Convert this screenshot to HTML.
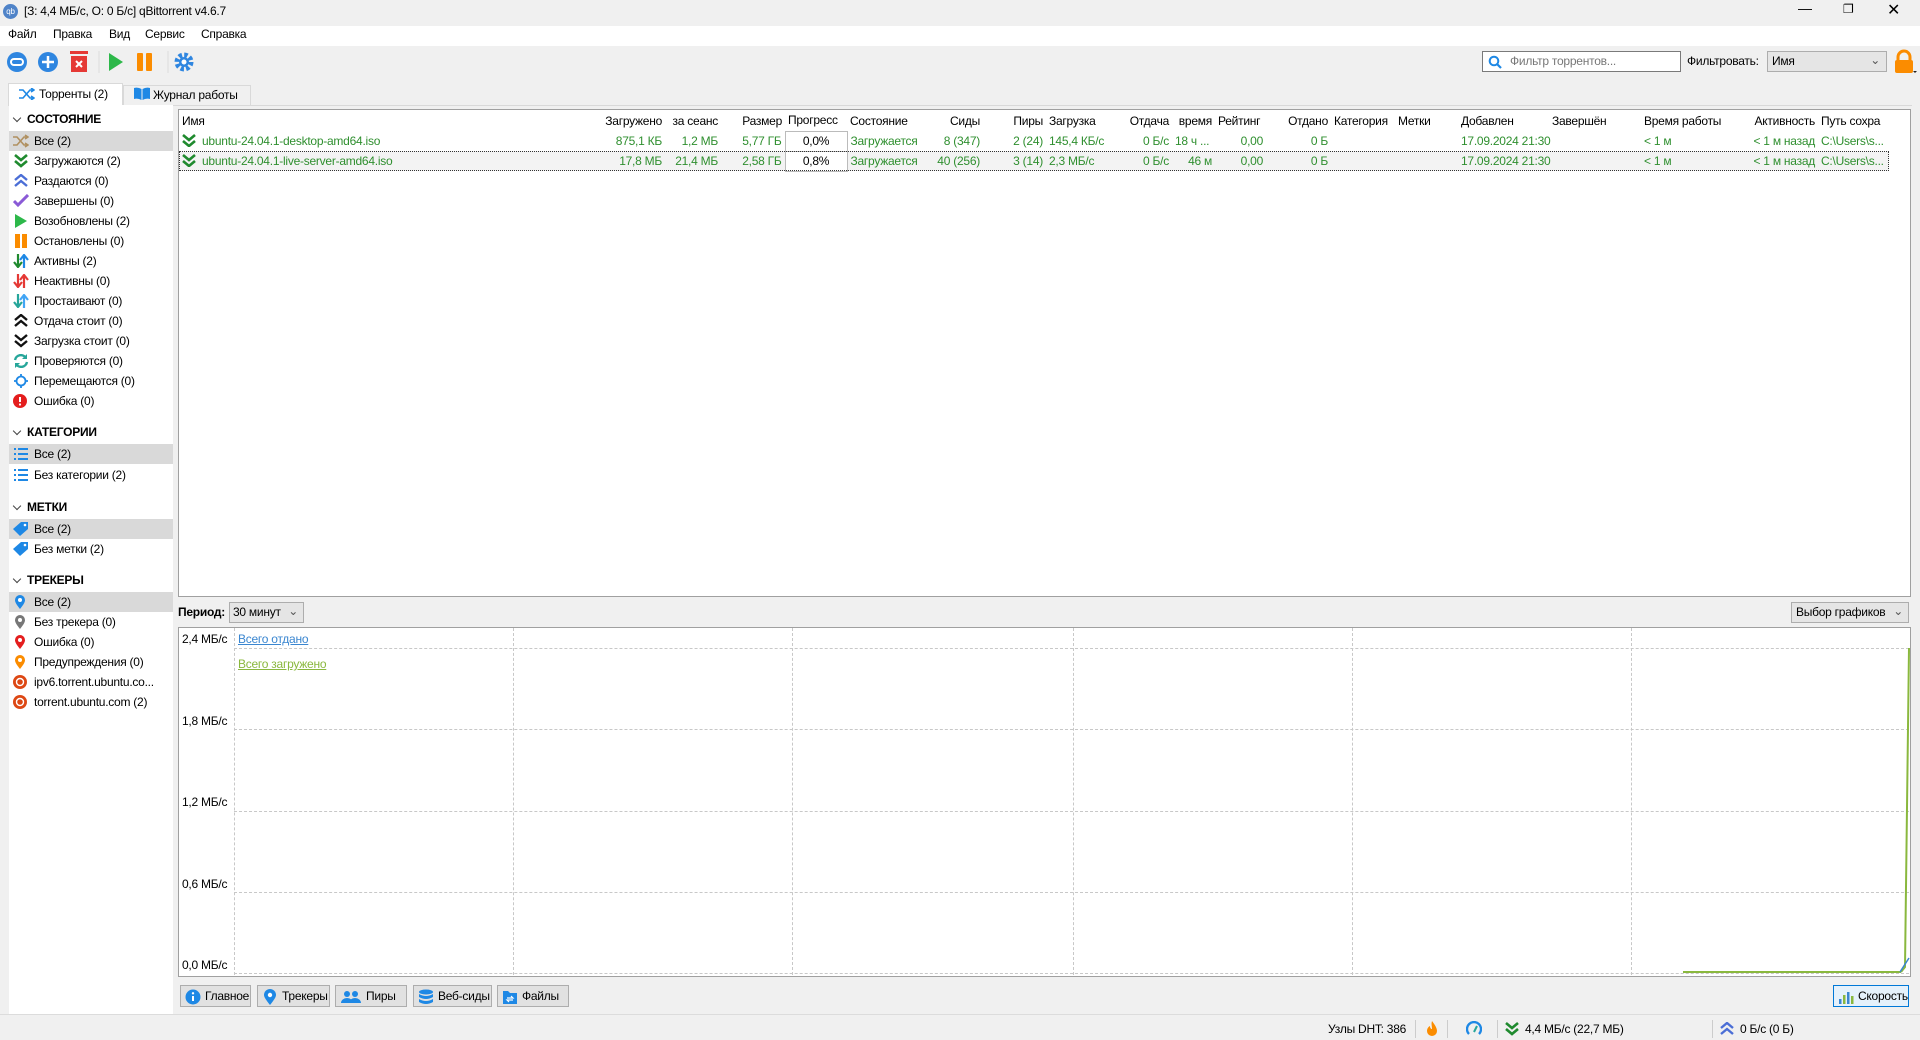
<!DOCTYPE html>
<html><head><meta charset="utf-8"><style>
*{box-sizing:border-box;margin:0;padding:0}
body{width:1920px;height:1040px;background:#f0f0f0;font-family:"Segoe UI","Liberation Sans","DejaVu Sans",sans-serif;font-size:12px;letter-spacing:-0.25px;color:#000;position:relative;overflow:hidden}
.a{position:absolute;white-space:nowrap}
.side{position:absolute;left:9px;top:105px;width:164px;height:910px;background:#fff}
.it{position:absolute;left:0;width:164px;height:20px;line-height:20px;padding-left:25px;white-space:nowrap}
.it.sel{background:#d9d9d9}
.it svg{position:absolute;left:4px;top:3px}
.hd{position:absolute;left:0;height:20px;line-height:20px;padding-left:18px;font-weight:bold}
.hd:before{content:"";position:absolute;left:5px;top:6px;width:5px;height:5px;border-right:1.5px solid #444;border-bottom:1.5px solid #444;transform:rotate(45deg)}
table{border-collapse:collapse;table-layout:fixed;position:absolute;left:179px;top:110px;width:1710px}
td{height:20px;padding:0 3px;overflow:visible;white-space:nowrap}
tr.h td{height:21px}
.r{text-align:right}
.g td{color:#2f8f2f}
.btn{position:absolute;top:985px;height:22px;background:#e1e1e1;border:1px solid #adadad;line-height:20px;padding-left:24px;white-space:nowrap}
.btn svg{position:absolute;left:4px;top:3px}
.hl{position:absolute;left:234px;width:1675px;border-top:1px dashed #c8c8c8}
.vl{position:absolute;top:628px;height:347px;border-left:1px dashed #c8c8c8}
.yl{position:absolute;left:182px}
.sep{position:absolute;top:1020px;height:18px;border-left:1px solid #ccc}
</style></head><body>
<div class="a" style="left:3px;top:4px;width:15px;height:15px;border-radius:50%;background:#4f83c8;color:#fff;font-size:8px;line-height:15px;text-align:center">qb</div>
<div class="a" style="left:24px;top:4px">[З: 4,4 МБ/с, О: 0 Б/с] qBittorrent v4.6.7</div>
<div class="a" style="left:1798px;top:0;font-size:14px">&#8212;</div>
<div class="a" style="left:1843px;top:2px;font-size:12px">&#10064;</div>
<div class="a" style="left:1887px;top:0px;font-size:16px">&#10005;</div>
<div class="a" style="left:0;top:26px;width:1920px;height:20px;background:#fff"></div>
<div class="a" style="left:8px;top:27px">Файл</div>
<div class="a" style="left:53px;top:27px">Правка</div>
<div class="a" style="left:109px;top:27px">Вид</div>
<div class="a" style="left:145px;top:27px">Сервис</div>
<div class="a" style="left:201px;top:27px">Справка</div>
<svg class="a" style="left:5px;top:51px" width="200" height="22">
<circle cx="12" cy="11" r="10" fill="#2f86e0"/><rect x="6" y="8" width="12" height="6" rx="3" fill="none" stroke="#fff" stroke-width="2"/>
<circle cx="43" cy="11" r="10" fill="#2f86e0"/><path d="M43 5v12M37 11h12" stroke="#fff" stroke-width="2.5"/>
<rect x="65" y="0" width="18" height="3" fill="#e53935"/><rect x="66" y="5" width="16" height="16" fill="#e53935"/><path d="M71 10l6 6M77 10l-6 6" stroke="#fff" stroke-width="2"/>
<line x1="94" y1="0" x2="94" y2="22" stroke="#ddd"/>
<path d="M104 2l14 9-14 9z" fill="#2db84a"/>
<rect x="132" y="2" width="6" height="18" rx="1" fill="#fb8c00"/><rect x="141" y="2" width="6" height="18" rx="1" fill="#fb8c00"/>
<line x1="163" y1="0" x2="163" y2="22" stroke="#ddd"/>
<circle cx="179" cy="11" r="7" fill="none" stroke="#2f86e0" stroke-width="5" stroke-dasharray="3.3 2.2"/><circle cx="179" cy="11" r="5" fill="#2f86e0"/><circle cx="179" cy="11" r="2.5" fill="#fff"/>
</svg>
<div class="a" style="left:1482px;top:51px;width:199px;height:21px;background:#fff;border:1px solid #7a7a7a"></div>
<svg class="a" style="left:1488px;top:55px" width="14" height="14"><circle cx="6" cy="6" r="4.3" fill="none" stroke="#1e88e5" stroke-width="2"/><path d="M9 9l4 4" stroke="#1e88e5" stroke-width="2.2"/></svg>
<div class="a" style="left:1510px;top:54px;color:#777">Фильтр торрентов...</div>
<div class="a" style="left:1687px;top:54px">Фильтровать:</div>
<div class="a" style="left:1767px;top:51px;width:120px;height:21px;background:#e5e5e5;border:1px solid #adadad;padding-left:4px;line-height:19px">Имя<span style="position:absolute;right:6px;top:-1px;color:#555">&#8964;</span></div>
<svg class="a" style="left:1893px;top:49px" width="24" height="26"><path d="M5 11V8a6 6 0 0 1 12 0v3" fill="none" stroke="#fb8c00" stroke-width="3"/><rect x="2" y="11" width="18" height="13" rx="2" fill="#fb8c00"/><path d="M20 22l4 0-2 2z" fill="#222"/></svg>
<div class="a" style="left:8px;top:83px;width:115px;height:23px;background:#fff;border:1px solid #d9d9d9;border-bottom:none"></div>
<div class="a" style="left:123px;top:85px;width:128px;height:20px;background:#f0f0f0;border:1px solid #d9d9d9;border-bottom:none"></div>
<svg class="a" style="left:19px;top:88px" width="16" height="12"><path d="M0 2h4l7 8h4M0 10h4l7-8h4M12 0l3 2-3 2M12 8l3 2-3 2" fill="none" stroke="#1e88e5" stroke-width="1.6"/></svg>
<div class="a" style="left:39px;top:87px">Торренты (2)</div>
<svg class="a" style="left:134px;top:87px" width="16" height="13"><path d="M0 1q4-1 7.5 1v11q-3.5-2-7.5-1zM8.5 2q3.5-2 7.5-1v11q-4-1-7.5 1z" fill="#1e88e5"/></svg>
<div class="a" style="left:153px;top:88px">Журнал работы</div>
<div class="a" style="left:8px;top:105px;width:1904px;height:1px;background:#d9d9d9"></div>
<div class="side">
<div class="hd" style="top:4px">СОСТОЯНИЕ</div>
<div class="it sel" style="top:26px"><svg width="16" height="14"><path d="M0 3h4l7 8h4M0 11h4l7-8h4M12 1l3 2-3 2M12 9l3 2-3 2" fill="none" stroke="#b09060" stroke-width="1.6"/></svg>Все (2)</div>
<div class="it" style="top:46px"><svg width="16" height="14"><path d="M2 1l6 5 6-5M2 7l6 5 6-5" fill="none" stroke="#1f8a2e" stroke-width="2.6"/></svg>Загружаются (2)</div>
<div class="it" style="top:66px"><svg width="16" height="14"><path d="M2 6l6-5 6 5M2 12l6-5 6 5" fill="none" stroke="#4b6ed6" stroke-width="2.4"/></svg>Раздаются (0)</div>
<div class="it" style="top:86px"><svg width="16" height="14"><path d="M1 7l4 4 10-10" fill="none" stroke="#8a5ad6" stroke-width="3"/></svg>Завершены (0)</div>
<div class="it" style="top:106px"><svg width="16" height="14"><path d="M2 0l12 7-12 7z" fill="#2db84a"/></svg>Возобновлены (2)</div>
<div class="it" style="top:126px"><svg width="16" height="14"><rect x="2" y="0" width="5" height="14" fill="#fb8c00"/><rect x="9" y="0" width="5" height="14" fill="#fb8c00"/></svg>Остановлены (0)</div>
<div class="it" style="top:146px"><svg width="16" height="14"><path d="M5 0v12M1 8l4 5 4-5" fill="none" stroke="#1f8a2e" stroke-width="2.2"/><path d="M11 14V2M7 6l4-5 4 5" fill="none" stroke="#1e88e5" stroke-width="2.2"/></svg>Активны (2)</div>
<div class="it" style="top:166px"><svg width="16" height="14"><path d="M5 0v12M1 8l4 5 4-5M11 14V2M7 6l4-5 4 5" fill="none" stroke="#e53935" stroke-width="2.2"/></svg>Неактивны (0)</div>
<div class="it" style="top:186px"><svg width="16" height="14"><path d="M5 0v12M1 8l4 5 4-5" fill="none" stroke="#26a69a" stroke-width="2.2"/><path d="M11 14V2M7 6l4-5 4 5" fill="none" stroke="#42a5f5" stroke-width="2.2"/></svg>Простаивают (0)</div>
<div class="it" style="top:206px"><svg width="16" height="14"><path d="M2 6l6-5 6 5M2 12l6-5 6 5" fill="none" stroke="#111" stroke-width="2.4"/></svg>Отдача стоит (0)</div>
<div class="it" style="top:226px"><svg width="16" height="14"><path d="M2 1l6 5 6-5M2 7l6 5 6-5" fill="none" stroke="#111" stroke-width="2.4"/></svg>Загрузка стоит (0)</div>
<div class="it" style="top:246px"><svg width="16" height="14"><path d="M2 6a6 6 0 0 1 11-2M14 8a6 6 0 0 1-11 2" fill="none" stroke="#26a69a" stroke-width="2.4"/><path d="M14 0v5h-5M2 14V9h5" fill="#26a69a"/></svg>Проверяются (0)</div>
<div class="it" style="top:266px"><svg width="16" height="14"><circle cx="8" cy="7" r="4.5" fill="none" stroke="#1e88e5" stroke-width="1.8"/><path d="M8 0v2M8 12v2M1 7h2M13 7h2" stroke="#1e88e5" stroke-width="1.8"/></svg>Перемещаются (0)</div>
<div class="it" style="top:286px"><svg width="16" height="14"><circle cx="7" cy="7" r="7" fill="#e41e1e"/><path d="M7 3v5" stroke="#fff" stroke-width="2"/><circle cx="7" cy="10.5" r="1.1" fill="#fff"/></svg>Ошибка (0)</div>
<div class="hd" style="top:317px">КАТЕГОРИИ</div>
<div class="it sel" style="top:339px"><svg width="16" height="14"><path d="M1 2h2M5 2h10M1 7h2M5 7h10M1 12h2M5 12h10" stroke="#1e88e5" stroke-width="2"/></svg>Все (2)</div>
<div class="it" style="top:360px"><svg width="16" height="14"><path d="M1 2h2M5 2h10M1 7h2M5 7h10M1 12h2M5 12h10" stroke="#1e88e5" stroke-width="2"/></svg>Без категории (2)</div>
<div class="hd" style="top:392px">МЕТКИ</div>
<div class="it sel" style="top:414px"><svg width="16" height="14"><path d="M8 0h7v7l-8 7-7-7z" fill="#1e88e5"/><circle cx="12" cy="3" r="1.3" fill="#fff"/></svg>Все (2)</div>
<div class="it" style="top:434px"><svg width="16" height="14"><path d="M8 0h7v7l-8 7-7-7z" fill="#1e88e5"/><circle cx="12" cy="3" r="1.3" fill="#fff"/></svg>Без метки (2)</div>
<div class="hd" style="top:465px">ТРЕКЕРЫ</div>
<div class="it sel" style="top:487px"><svg width="16" height="14"><path d="M7 14C3 9 2 7 2 5a5 5 0 0 1 10 0c0 2-1 4-5 9z" fill="#1e88e5"/><circle cx="7" cy="5" r="2" fill="#fff"/></svg>Все (2)</div>
<div class="it" style="top:507px"><svg width="16" height="14"><path d="M7 14C3 9 2 7 2 5a5 5 0 0 1 10 0c0 2-1 4-5 9z" fill="#777"/><circle cx="7" cy="5" r="2" fill="#fff"/></svg>Без трекера (0)</div>
<div class="it" style="top:527px"><svg width="16" height="14"><path d="M7 14C3 9 2 7 2 5a5 5 0 0 1 10 0c0 2-1 4-5 9z" fill="#e41e1e"/><circle cx="7" cy="5" r="2" fill="#fff"/></svg>Ошибка (0)</div>
<div class="it" style="top:547px"><svg width="16" height="14"><path d="M7 14C3 9 2 7 2 5a5 5 0 0 1 10 0c0 2-1 4-5 9z" fill="#fb8c00"/><circle cx="7" cy="5" r="2" fill="#fff"/></svg>Предупреждения (0)</div>
<div class="it" style="top:567px"><svg width="16" height="14"><circle cx="7" cy="7" r="7" fill="#dd4814"/><circle cx="7" cy="7" r="3.5" fill="none" stroke="#fff" stroke-width="1.4"/></svg>ipv6.torrent.ubuntu.co...</div>
<div class="it" style="top:587px"><svg width="16" height="14"><circle cx="7" cy="7" r="7" fill="#dd4814"/><circle cx="7" cy="7" r="3.5" fill="none" stroke="#fff" stroke-width="1.4"/></svg>torrent.ubuntu.com (2)</div>
</div>
<div class="a" style="left:178px;top:109px;width:1733px;height:488px;background:#fff;border:1px solid #a0a0a0"></div>
<table>
<colgroup><col style="width:417px"><col style="width:69px"><col style="width:56px"><col style="width:64px"><col style="width:62px"><col style="width:80px"><col style="width:56px"><col style="width:63px"><col style="width:63px"><col style="width:63px"><col style="width:43px"><col style="width:51px"><col style="width:65px"><col style="width:64px"><col style="width:63px"><col style="width:91px"><col style="width:92px"><col style="width:88px"><col style="width:89px"><col style="width:71px"></colgroup>
<tr class="h"><td>Имя</td><td class="r">Загружено</td><td class="r">за сеанс</td><td class="r">Размер</td><td>Прогресс</td><td>Состояние</td><td class="r">Сиды</td><td class="r">Пиры</td><td>Загрузка</td><td class="r">Отдача</td><td class="r">время</td><td>Рейтинг</td><td class="r">Отдано</td><td>Категория</td><td>Метки</td><td>Добавлен</td><td>Завершён</td><td>Время работы</td><td class="r">Активность</td><td>Путь сохра</td></tr>
<tr class="g"><td style="padding-left:3px"><svg width="14" height="13" style="vertical-align:-2px;margin-right:6px"><path d="M1 1l6 5 6-5M1 7l6 5 6-5" fill="none" stroke="#1f8a2e" stroke-width="2.6"/></svg>ubuntu-24.04.1-desktop-amd64.iso</td><td class="r">875,1 КБ</td><td class="r">1,2 МБ</td><td class="r">5,77 ГБ</td><td style="text-align:center;color:#000;border:1px solid #bbb;background:#fff">0,0%</td><td>Загружается</td><td class="r">8 (347)</td><td class="r">2 (24)</td><td>145,4 КБ/с</td><td class="r">0 Б/с</td><td>18 ч ...</td><td class="r">0,00</td><td class="r">0 Б</td><td></td><td></td><td>17.09.2024 21:30</td><td></td><td>&lt; 1 м</td><td class="r">&lt; 1 м назад</td><td>C:\Users\s...</td></tr>
<tr class="g" style="background:#f3f3f3;outline:1px dotted #333;outline-offset:-1px"><td style="padding-left:3px"><svg width="14" height="13" style="vertical-align:-2px;margin-right:6px"><path d="M1 1l6 5 6-5M1 7l6 5 6-5" fill="none" stroke="#1f8a2e" stroke-width="2.6"/></svg>ubuntu-24.04.1-live-server-amd64.iso</td><td class="r">17,8 МБ</td><td class="r">21,4 МБ</td><td class="r">2,58 ГБ</td><td style="text-align:center;color:#000;border:1px solid #bbb;background:#fff">0,8%</td><td>Загружается</td><td class="r">40 (256)</td><td class="r">3 (14)</td><td>2,3 МБ/с</td><td class="r">0 Б/с</td><td class="r">46 м</td><td class="r">0,00</td><td class="r">0 Б</td><td></td><td></td><td>17.09.2024 21:30</td><td></td><td>&lt; 1 м</td><td class="r">&lt; 1 м назад</td><td>C:\Users\s...</td></tr>
</table>
<div class="a" style="left:178px;top:605px;font-weight:bold">Период:</div>
<div class="a" style="left:229px;top:602px;width:75px;height:21px;background:#e5e5e5;border:1px solid #adadad;padding-left:3px;line-height:19px">30 минут<span style="position:absolute;right:5px;top:-1px;color:#555">&#8964;</span></div>
<div class="a" style="left:1791px;top:602px;width:118px;height:21px;background:#e5e5e5;border:1px solid #adadad;padding-left:4px;line-height:19px">Выбор графиков<span style="position:absolute;right:5px;top:-1px;color:#555">&#8964;</span></div>
<div class="a" style="left:178px;top:627px;width:1733px;height:350px;background:#fff;border:1px solid #a0a0a0"></div>
<div class="hl" style="top:648px"></div><div class="hl" style="top:729px"></div><div class="hl" style="top:811px"></div><div class="hl" style="top:892px"></div><div class="hl" style="top:973px"></div>
<div class="vl" style="left:234px"></div><div class="vl" style="left:513px"></div><div class="vl" style="left:792px"></div><div class="vl" style="left:1073px"></div><div class="vl" style="left:1352px"></div><div class="vl" style="left:1631px"></div>
<div class="yl" style="top:632px">2,4 МБ/с</div>
<div class="yl" style="top:714px">1,8 МБ/с</div>
<div class="yl" style="top:795px">1,2 МБ/с</div>
<div class="yl" style="top:877px">0,6 МБ/с</div>
<div class="yl" style="top:958px">0,0 МБ/с</div>
<div class="a" style="left:238px;top:632px;color:#3a86d0;text-decoration:underline">Всего отдано</div>
<div class="a" style="left:238px;top:657px;color:#8ab83e;text-decoration:underline">Всего загружено</div>
<svg class="a" style="left:1680px;top:640px" width="230" height="340"><path d="M3 332H221" fill="none" stroke="#8ab83e" stroke-width="2"/><path d="M221 332L225 327L229 8" fill="none" stroke="#8ab83e" stroke-width="2"/><path d="M220 332L229 318" fill="none" stroke="#3a86d0" stroke-width="1.5"/></svg>
<div class="btn" style="left:180px;width:71px"><svg width="16" height="16"><circle cx="8" cy="8" r="7.5" fill="#1e88e5"/><path d="M8 7v5" stroke="#fff" stroke-width="2"/><circle cx="8" cy="4.3" r="1.2" fill="#fff"/></svg>Главное</div>
<div class="btn" style="left:257px;width:73px"><svg width="16" height="16"><path d="M8 16C4 11 2 8 2 6a6 6 0 0 1 12 0c0 2-2 5-6 10z" fill="#1e88e5"/><circle cx="8" cy="6" r="2.2" fill="#fff"/></svg>Трекеры</div>
<div class="btn" style="left:335px;width:72px;padding-left:30px"><svg width="22" height="16"><circle cx="7" cy="5" r="3" fill="#1e88e5"/><circle cx="15" cy="5" r="3" fill="#1e88e5"/><path d="M1 14a6 5 0 0 1 12 0zM9 14a6 5 0 0 1 12 0z" fill="#1e88e5"/></svg>Пиры</div>
<div class="btn" style="left:413px;width:79px"><svg width="16" height="16"><ellipse cx="8" cy="3" rx="7" ry="2.5" fill="#1e88e5"/><path d="M1 5q7 4 14 0v3q-7 4-14 0zM1 10q7 4 14 0v3q-7 4-14 0z" fill="#1e88e5"/></svg>Веб-сиды</div>
<div class="btn" style="left:497px;width:72px"><svg width="16" height="16"><path d="M1 2h5l2 2h7v11H1z" fill="#1e88e5"/><path d="M5 9h6l-2-2M11 11H5l2 2" fill="none" stroke="#fff" stroke-width="1.2"/></svg>Файлы</div>
<div class="btn" style="left:1833px;width:76px;background:#e5f1fb;border-color:#0078d7"><svg width="16" height="16"><rect x="1" y="10" width="2.5" height="5" fill="#3a86d0"/><rect x="5" y="6" width="2.5" height="9" fill="#8ab83e"/><rect x="9" y="3" width="2.5" height="12" fill="#3a86d0"/><rect x="13" y="7" width="2.5" height="8" fill="#8ab83e"/></svg>Скорость</div>
<div class="a" style="left:0;top:1014px;width:1920px;height:1px;background:#dcdcdc"></div>
<div class="a" style="left:1328px;top:1022px">Узлы DHT: 386</div>
<div class="sep" style="left:1415px"></div>
<svg class="a" style="left:1426px;top:1021px" width="12" height="16"><path d="M6 0C9 4 11 7 11 10a5 5 0 0 1-10 0c0-2 1-4 3-5 0 2 1 3 2 3 0-3-1-5 0-8z" fill="#fb8c00"/></svg>
<div class="sep" style="left:1447px"></div>
<svg class="a" style="left:1466px;top:1021px" width="16" height="16"><path d="M3 13a7 7 0 1 1 10 0" fill="none" stroke="#1e88e5" stroke-width="2.4"/><path d="M8 11l3-6" stroke="#26a69a" stroke-width="2"/></svg>
<div class="sep" style="left:1497px"></div>
<svg class="a" style="left:1505px;top:1022px" width="14" height="14"><path d="M1 1l6 5 6-5M1 7l6 5 6-5" fill="none" stroke="#1f8a2e" stroke-width="2.6"/></svg>
<div class="a" style="left:1525px;top:1022px">4,4 МБ/с (22,7 МБ)</div>
<div class="sep" style="left:1712px"></div>
<svg class="a" style="left:1720px;top:1022px" width="14" height="14"><path d="M1 6l6-5 6 5M1 12l6-5 6 5" fill="none" stroke="#4b6ed6" stroke-width="2.4"/></svg>
<div class="a" style="left:1740px;top:1022px">0 Б/с (0 Б)</div>
</body></html>
